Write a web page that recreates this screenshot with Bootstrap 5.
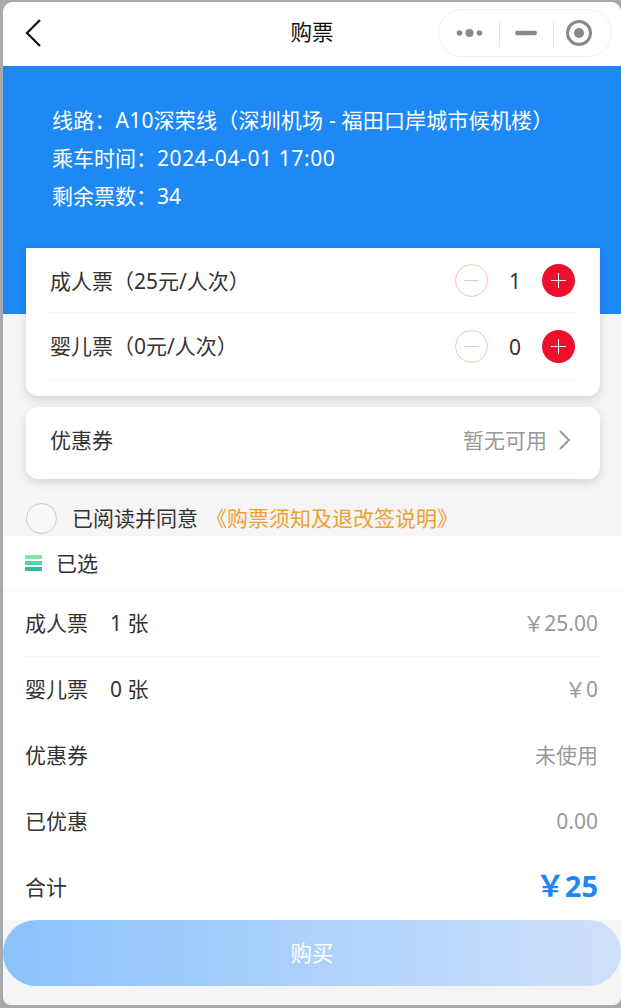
<!DOCTYPE html>
<html lang="zh">
<head>
<meta charset="utf-8">
<title>购票</title>
<link href="https://cdn.jsdelivr.net/npm/bootstrap@5.3.0/dist/css/bootstrap.min.css" rel="stylesheet">
<style>
html,body{height:100%;}
body{background:#a6a9ae;padding:2px 0 3px 3px;font-family:"Noto Sans","Noto Sans CJK SC",sans-serif;font-size:21px;color:#333;overflow:hidden;}
.win{width:618px;height:1003px;background:#f5f5f5;border-radius:10px 10px 8px 8px;overflow:hidden;}
.topbar{height:64px;background:#fff;padding:0 9px 0 21px;}
.backi{margin-top:-2px;}
.ttl{font-size:21.5px;color:#111;left:0;right:0;text-align:center;margin-top:-3px;}
.capsule{width:174px;height:48px;border:1px solid #f0f0f0;border-radius:24px;margin-top:-2px;}
.capsule>div{height:100%;}
.cap-a{width:60px;padding-left:2px;}
.cap-b{width:55px;}
.cap-c{width:58px;padding-right:6px;}
.cap-b,.cap-c{position:relative;}
.cap-b::before,.cap-c::before{content:"";position:absolute;left:0;top:11px;height:26px;border-left:1px solid #e5e5e5;}
.hero{height:248px;background:#1e88f5;color:#fff;padding:35px 50px 0 49px;line-height:38px;font-size:21px;}
.hero div{white-space:nowrap;}
.wide1{letter-spacing:.2px;}
.wide2{letter-spacing:.6px;}
.panel{background:#fff;margin:0 21px 0 23px;padding:0 25px 0 24px;border-radius:0 0 12px 12px;box-shadow:0 4px 10px rgba(0,0,0,.13);}
.panel-a{margin-top:-66px;height:148px;}
.panel-b{margin-top:11px;height:72px;border-radius:12px;}
.tk-row{border-bottom:1px solid #f6f6f6;}
.tk-one{height:65px;}
.tk-two{height:67px;}
.tk-row .txt{margin-top:3px;}
.tk-two .ctl{margin-top:1px;}
.tk-two .txt{margin-top:2px;}
.cp-row{height:66px;border-bottom:1px solid #f6f6f6;}
.cp-row>span{margin-top:2px;}
.rnd{width:33px;height:33px;border-radius:50%;position:relative;flex:none;}
.rnd::before{content:"";position:absolute;left:9px;right:9px;top:16px;height:1px;}
.minus{border:1px solid #eec4c0;}
.minus::before{background:#d8cfcd;left:8px;right:8px;top:15px;}
.plus{background:#ee0f2d;}
.plus::before{background:#fff;}
.plus::after{content:"";position:absolute;top:9px;bottom:9px;left:16px;width:1px;background:#fff;}
.num{width:54px;text-align:center;font-size:21px;margin-top:3px;}
.gr{color:#999;}
.arrow{margin:-2px 4px 0 10px;}
.agree{height:57px;padding:21px 0 0 23px;flex:none;}
.tick{width:31px;height:31px;border:1px solid #ccc;border-radius:50%;margin-right:15px;background:#f8f8f8;}
.agt{margin-top:2px;}
.org{color:#f0a030;margin:2px 0 0 8px;}
.sheet{background:#fff;height:384px;padding-left:22px;padding-right:23px;flex:none;}
.sel-h{height:55px;margin:0 -23px 0 -22px;padding-left:22px;border-bottom:1px solid #f6f6f6;}
.sel-t{margin-top:2px;}
.bars{width:17px;height:16px;margin-right:14px;flex-direction:column;justify-content:space-between;}
.bars i{display:block;height:4px;}
.ln{height:66px;}
.ln.bd{border-bottom:1px solid #f6f6f6;}
.ln .q{margin-left:22px;}
.ln-last{height:65px;}
.tot{color:#1e88f5;font-weight:700;font-size:29px;font-family:"Open Sans","Noto Sans CJK SC",sans-serif;margin-top:-3px;}
.buy{height:66px;border-radius:33px;background:linear-gradient(90deg,#8ac2fc,#cfe1fa);color:#fff;font-size:21.5px;border:0;width:100%;display:block;flex:none;}
</style>
</head>
<body>
<div class="win d-flex flex-column">
  <div class="topbar d-flex align-items-center justify-content-between position-relative flex-shrink-0">
    <svg class="backi" width="20" height="30" viewBox="0 0 20 30"><path d="M16 2 L3 15 L16 28" fill="none" stroke="#111" stroke-width="2.2"/></svg>
    <div class="ttl position-absolute">购票</div>
    <div class="capsule d-flex">
      <div class="cap-a d-flex align-items-center justify-content-center"><svg width="28" height="12" viewBox="0 0 28 12" fill="#8a8a8a"><circle cx="3.5" cy="6" r="2.8"/><circle cx="13.5" cy="6" r="4"/><circle cx="23.5" cy="6" r="2.8"/></svg></div>
      <div class="cap-b d-flex align-items-center justify-content-center"><svg width="22" height="6" viewBox="0 0 22 6"><rect width="22" height="4.5" y=".7" rx="2.2" fill="#888"/></svg></div>
      <div class="cap-c d-flex align-items-center justify-content-center"><svg width="28" height="28" viewBox="0 0 28 28"><circle cx="14" cy="14" r="11.5" fill="none" stroke="#888" stroke-width="3"/><circle cx="14" cy="14" r="5" fill="#888"/></svg></div>
    </div>
  </div>
  <div class="hero flex-shrink-0">
    <div class="wide1">线路：A10深荣线（深圳机场 - 福田口岸城市候机楼）</div>
    <div>乘车时间：<span class="wide2">2024-04-01 17:00</span></div>
    <div>剩余票数：34</div>
  </div>
  <div class="panel panel-a flex-shrink-0">
    <div class="tk-row tk-one d-flex align-items-center justify-content-between">
      <span class="txt">成人票（25元/人次）</span>
      <div class="ctl d-flex align-items-center"><span class="rnd minus"></span><span class="num">1</span><span class="rnd plus"></span></div>
    </div>
    <div class="tk-row tk-two d-flex align-items-center justify-content-between">
      <span class="txt">婴儿票（0元/人次）</span>
      <div class="ctl d-flex align-items-center"><span class="rnd minus"></span><span class="num">0</span><span class="rnd plus"></span></div>
    </div>
  </div>
  <div class="panel panel-b flex-shrink-0">
    <div class="cp-row d-flex align-items-center justify-content-between">
      <span>优惠券</span>
      <span class="gr d-flex align-items-center">暂无可用<svg class="arrow" width="14" height="22" viewBox="0 0 14 22"><path d="M3 2 L12 11 L3 20" fill="none" stroke="#999" stroke-width="2"/></svg></span>
    </div>
  </div>
  <div class="agree d-flex align-items-center"><span class="tick"></span><span class="agt">已阅读并同意</span><span class="org">《购票须知及退改签说明》</span></div>
  <div class="sheet">
    <div class="sel-h d-flex align-items-center"><span class="bars d-flex"><i style="background:#85e3a8"></i><i style="background:#4fd8a2"></i><i style="background:#2cc09a"></i></span><span class="sel-t">已选</span></div>
    <div class="ln bd d-flex align-items-center justify-content-between"><span>成人票<span class="q">1 张</span></span><span class="gr">￥25.00</span></div>
    <div class="ln d-flex align-items-center justify-content-between"><span>婴儿票<span class="q">0 张</span></span><span class="gr">￥0</span></div>
    <div class="ln d-flex align-items-center justify-content-between"><span>优惠券</span><span class="gr">未使用</span></div>
    <div class="ln d-flex align-items-center justify-content-between"><span>已优惠</span><span class="gr">0.00</span></div>
    <div class="ln ln-last d-flex align-items-center justify-content-between"><span>合计</span><span class="tot">￥25</span></div>
  </div>
  <button class="buy" type="button">购买</button>
</div>
<script src="https://cdn.jsdelivr.net/npm/bootstrap@5.3.0/dist/js/bootstrap.bundle.min.js"></script>
</body>
</html>
